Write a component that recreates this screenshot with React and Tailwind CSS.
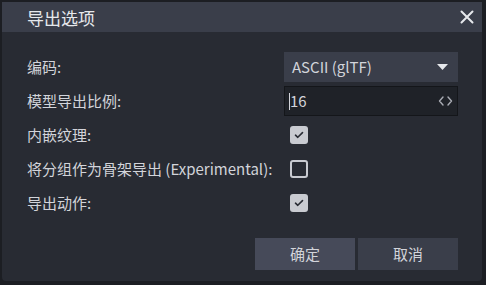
import React from 'react';

const font = { fontFamily: '"Noto Sans CJK SC", "Noto Sans", sans-serif' };

const Check = ({ checked }) => (
  <div
    className={
      checked
        ? 'w-[18px] h-[18px] rounded-[3px] bg-[#c9cbd1] flex items-center justify-center'
        : 'w-[18px] h-[18px] rounded-[3px] border-2 border-[#c9cbd1]'
    }
  >
    {checked && (
      <svg width="10" height="8" viewBox="0 0 10 8" fill="none">
        <path d="M1.5 4.2 L3.8 6.3 L8.5 1.6" stroke="#2a2d35" strokeWidth="1.6" strokeLinecap="round" strokeLinejoin="round" />
      </svg>
    )}
  </div>
);

const App = () => {
  return (
    <div className="w-[486px] h-[285px] bg-[#1c1e23] pt-[2px] pl-[2px] pr-[4px] pb-[4px]" style={font}>
      <div className="h-full flex flex-col bg-[#282b33] rounded-b-[4px] overflow-hidden">
        {/* Title bar */}
        <div className="h-[30px] bg-[#3a3e4a] flex items-center justify-between pl-[25px] pr-[8px]">
          <span className="text-[17px] text-[#e6e8ec] leading-none">导出选项</span>
          <svg width="14" height="14" viewBox="0 0 14 14">
            <path d="M1.5 1.5 L12.5 12.5 M12.5 1.5 L1.5 12.5" stroke="#e6e8ec" strokeWidth="2" strokeLinecap="round" />
          </svg>
        </div>

        {/* Body */}
        <div className="flex-1 flex flex-col pl-[25px] pr-[24px] pt-[20px]">
          <div className="grid grid-cols-[1fr_174px] auto-rows-[30px] gap-y-[4px] text-[15px] text-[#d2d4da]">
            <div className="flex items-center">编码:</div>
            <div className="bg-[#3a3e4a] flex items-center justify-between pl-[8px] pr-[10px]">
              <span>ASCII (glTF)</span>
              <svg width="11" height="6" viewBox="0 0 11 6">
                <path d="M0 0 H11 L5.5 6 Z" fill="#e6e8ec" />
              </svg>
            </div>

            <div className="flex items-center">模型导出比例:</div>
            <div className="bg-[#1f2228] border border-[#14161a] flex items-center justify-between pl-[4px] pr-[4px]">
              <span className="flex items-center">
                <span className="w-px h-[17px] bg-[#d2d4da]" />
                <span>16</span>
              </span>
              <svg width="15" height="10" viewBox="0 0 15 10" fill="none">
                <path d="M5 1 L1.5 5 L5 9 M10 1 L13.5 5 L10 9" stroke="#a9acb4" strokeWidth="1.4" strokeLinecap="round" strokeLinejoin="round" />
              </svg>
            </div>

            <div className="flex items-center">内嵌纹理:</div>
            <div className="flex items-center pl-[6px]"><Check checked /></div>

            <div className="flex items-center whitespace-nowrap">将分组作为骨架导出 (Experimental):</div>
            <div className="flex items-center pl-[6px]"><Check /></div>

            <div className="flex items-center">导出动作:</div>
            <div className="flex items-center pl-[6px]"><Check checked /></div>
          </div>

          <div className="flex justify-end gap-[3px] mt-[20px]">
            <button className="w-[100px] h-[32px] bg-[#464a59] text-[15px] text-[#d2d4da]">确定</button>
            <button className="w-[100px] h-[32px] bg-[#3a3e4a] text-[15px] text-[#d2d4da]">取消</button>
          </div>
        </div>
      </div>
    </div>
  );
};

export default App;
